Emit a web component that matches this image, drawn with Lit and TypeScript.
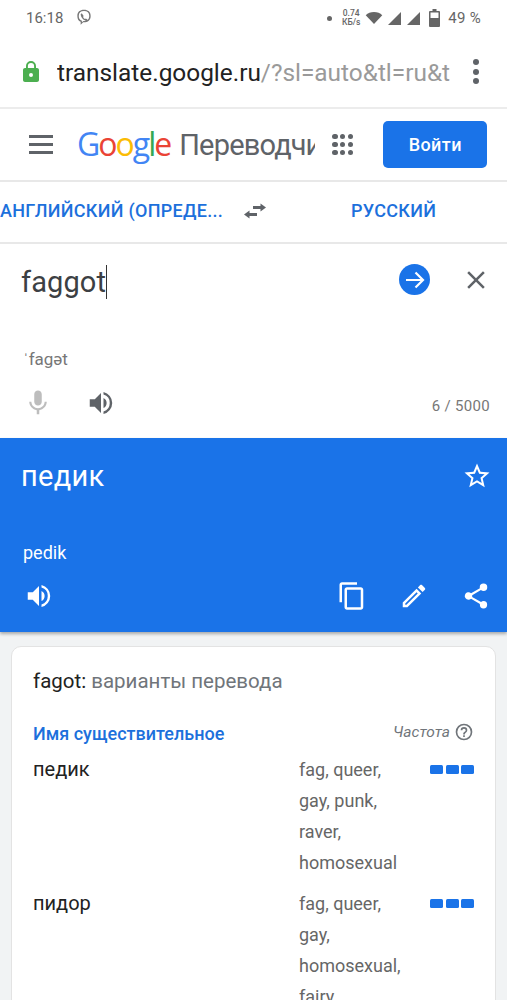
import { LitElement, html, css, svg } from 'lit';
import { customElement } from 'lit/decorators.js';

const icon = (size: number, d: string, cls = '') => html`
  <svg class=${cls} width=${size} height=${size} viewBox="0 0 24 24" fill="currentColor">${svg`<path d=${d}></path>`}</svg>
`;

const SPEAKER = 'M3 9v6h4l5 5V4L7 9H3zm13.5 3A4.5 4.5 0 0 0 14 7.97v8.05A4.48 4.48 0 0 0 16.5 12zM14 3.23v2.06a7 7 0 0 1 0 13.42v2.06a9 9 0 0 0 0-17.54z';
const MIC = 'M12 14c1.66 0 3-1.34 3-3V5c0-1.66-1.34-3-3-3S9 3.34 9 5v6c0 1.66 1.34 3 3 3zm5.3-3c0 3-2.54 5.1-5.3 5.1S6.7 14 6.7 11H5c0 3.41 2.72 6.23 6 6.72V21h2v-3.28c3.28-.48 6-3.3 6-6.72h-1.7z';
const COPY = 'M16 1H4c-1.1 0-2 .9-2 2v14h2V3h12V1zm3 4H8c-1.1 0-2 .9-2 2v14c0 1.1.9 2 2 2h11c1.1 0 2-.9 2-2V7c0-1.1-.9-2-2-2zm0 16H8V7h11v14z';
const PENCIL = 'M14.06 9.02l.92.92L5.92 19H5v-.92l9.06-9.06M17.66 3c-.25 0-.51.1-.7.29l-1.83 1.83 3.75 3.75 1.83-1.83a1 1 0 0 0 0-1.41l-2.34-2.34c-.2-.2-.45-.29-.71-.29zm-3.6 3.19L3 17.25V21h3.75L17.81 9.94l-3.75-3.75z';
const SHARE = 'M18 16.08c-.76 0-1.44.3-1.96.77L8.91 12.7c.05-.23.09-.46.09-.7s-.04-.47-.09-.7l7.05-4.11c.54.5 1.25.81 2.04.81a3 3 0 1 0-3-3c0 .24.04.47.09.7L8.04 9.81A3 3 0 1 0 6 15c.79 0 1.5-.31 2.04-.81l7.12 4.16c-.05.21-.08.43-.08.65a2.92 2.92 0 1 0 2.92-2.92z';
const STAR = 'M22 9.24l-7.19-.62L12 2 9.19 8.63 2 9.24l5.46 4.73L5.82 21 12 17.27 18.18 21l-1.63-7.03L22 9.24zM12 15.4l-3.76 2.27 1-4.28-3.32-2.88 4.38-.38L12 6.1l1.71 4.04 4.38.38-3.32 2.88 1 4.28L12 15.4z';
const HELP = 'M11 18h2v-2h-2v2zm1-16a10 10 0 1 0 0 20 10 10 0 0 0 0-20zm0 18a8 8 0 1 1 0-16 8 8 0 0 1 0 16zm0-14a4 4 0 0 0-4 4h2a2 2 0 1 1 4 0c0 2-3 1.75-3 5h2c0-2.25 3-2.5 3-5a4 4 0 0 0-4-4z';
const LOCK = 'M18 8h-1V6A5 5 0 0 0 7 6v2H6c-1.1 0-2 .9-2 2v10c0 1.1.9 2 2 2h12c1.1 0 2-.9 2-2V10c0-1.1-.9-2-2-2zm-6 9a2 2 0 1 1 0-4 2 2 0 0 1 0 4zm3.1-9H8.900V6a3.100 3.100 0 0 1 6.200 0v2z';
const CLOSE = 'M19 6.41L17.59 5 12 10.59 6.410 5 5 6.410 10.590 12 5 17.590 6.410 19 12 13.410 17.590 19 19 17.590 13.410 12z';

const ROWS = [
  { word: 'педик', syn: ['fag, queer,', 'gay, punk,', 'raver,', 'homosexual'] },
  { word: 'пидор', syn: ['fag, queer,', 'gay,', 'homosexual,', 'fairy'] },
];

@customElement('app-root')
export class AppRoot extends LitElement {
  static styles = css`
    :host {
      display: block;
      width: 507px;
      height: 1000px;
      overflow: hidden;
      background: #f1f3f4;
      font-family: Roboto, 'Liberation Sans', sans-serif;
    }
    svg { display: block; flex: none; }

    .status {
      height: 36px;
      background: #fff;
      display: flex;
      align-items: center;
      padding: 0 26px;
      color: #666;
      font-size: 15px;
    }
    .status .viber { margin-left: 11px; color: #777; }
    .status .right { margin-left: auto; display: flex; align-items: center; }
    .status .dot { width: 5px; height: 5px; border-radius: 50%; background: #666; margin-right: 9px; }
    .speed { font-size: 8.500px; line-height: 9px; text-align: center; width: 20px; margin-right: 4px; font-weight: 500; }
    .pct { margin-left: 8px; letter-spacing: 0.3px; }
    .signal { margin-left: 6px; }
    .signal.first { margin-left: 5px; }
    .battery { margin-left: 9px; }

    .urlbar {
      height: 71px;
      background: #fff;
      border-bottom: 2px solid #ececec;
      display: flex;
      align-items: center;
      padding-left: 19px;
    }
    .lock { color: #4caf50; }
    .url {
      margin: 1px 0 0 14px;
      font-size: 24.400px;
      color: #222;
      white-space: nowrap;
      width: 397px;
      overflow: hidden;
    }
    .url span { color: #9a9a9a; }
    .more { margin-left: 19px; display: flex; flex-direction: column; gap: 3.500px; }
    .more i { width: 6px; height: 6px; border-radius: 50%; background: #5f6368; display: block; }

    .topbar {
      height: 71px;
      background: #fff;
      border-bottom: 2px solid #e8e8e8;
      display: flex;
      align-items: center;
      padding-left: 29px;
    }
    .burger { display: flex; flex-direction: column; gap: 5px; width: 24px; }
    .burger i { height: 3px; background: #5f6368; display: block; }
    .logo {
      margin-left: 24px;
      font-family: 'Open Sans', sans-serif;
      font-size: 32px;
      font-weight: 500;
      letter-spacing: -2px;
      line-height: 40px;
      margin-top: -2px;
    }
    .b { color: #4285f4; } .r { color: #ea4335; } .y { color: #fbbc05; } .g { color: #34a853; }
    .product {
      margin-left: 9px;
      width: 136px;
      overflow: hidden;
      white-space: nowrap;
      font-size: 29px;
      letter-spacing: -0.800px;
      color: #5f6368;
      line-height: 40px;
    }
    .apps { margin-left: 17px; display: grid; grid-template-columns: repeat(3, 5.500px); gap: 2.300px; }
    .apps i { width: 5.500px; height: 5.500px; border-radius: 50%; background: #5f6368; display: block; }
    .signin {
      margin-left: 30px;
      width: 104px;
      height: 47px;
      border-radius: 5px;
      background: #1a73e8;
      color: #fff;
      font-size: 18px;
      font-weight: 500;
      display: flex;
      align-items: center;
      justify-content: center;
      letter-spacing: 0.4px;
    }

    .langs {
      height: 62px;
      box-sizing: border-box;
      padding-bottom: 3px;
      background: #fff;
      border-bottom: 2px solid #e8e8e8;
      display: flex;
      align-items: center;
      color: #1c70dc;
      font-size: 18px;
      font-weight: 500;
      letter-spacing: 0.3px;
    }
    .langs .src { width: 243px; white-space: nowrap; }
    .langs .swap { color: #5f6368; width: 24px; }
    .langs .dst { margin-left: 84px; }

    .input {
      height: 194px;
      background: #fff;
      display: flex;
      flex-direction: column;
      padding: 0 17px 0 21px;
    }
    .entry { display: flex; align-items: center; height: 72px; }
    .entry .text { font-size: 29px; color: #3c4043; letter-spacing: 0.1px; border-right: 1px solid #333; line-height: 34px; margin-top: 4px; }
    .go {
      margin: -1px 0 0 auto;
      width: 31px;
      height: 31px;
      border-radius: 50%;
      background: #1a73e8;
      color: #fff;
      display: flex;
      align-items: center;
      justify-content: center;
    }
    .close { margin: -1px -1px 0 31px; color: #5f6368; }
    .phon { margin: 33px 0 0 2px; font-size: 17px; color: #777; line-height: 20px; }
    .tools { display: flex; align-items: center; margin-top: 19px; }
    .tools .mic { color: #bdbdbd; margin-left: 2px; }
    .tools .spk { color: #5f6368; margin-left: 33px; }
    .tools .count { margin-left: auto; font-size: 15px; color: #777; letter-spacing: 0.3px; margin-top: 5px; }

    .result {
      height: 194px;
      background: #1a73e8;
      color: #fff;
      box-shadow: 0 2px 3px rgba(0, 0, 0, 0.3);
      padding: 0 16px 0 21px;
      display: flex;
      flex-direction: column;
      position: relative;
    }
    .res-top { display: flex; align-items: center; height: 76px; }
    .res-top .word { font-size: 29px; letter-spacing: 0.3px; }
    .res-top svg { margin: 0 -1px 0 auto; }
    .translit { margin: 29px 0 0 2px; font-size: 18px; line-height: 20px; }
    .actions { display: flex; align-items: center; margin-top: 18px; padding-left: 3px; }
    .actions .last { margin-left: auto; display: flex; gap: 32px; }

    .card {
      margin: 14px 11px 0;
      background: #fff;
      border: 1px solid #e3e3e3;
      border-radius: 10px;
      padding: 22px 21px 0;
    }
    .card h2 { margin: 0; font-size: 20.500px; line-height: 24px; font-weight: 400; color: #70757a; }
    .card h2 b { font-weight: 400; color: #222; }
    .pos { display: flex; align-items: center; justify-content: space-between; margin: 28px 0 9px; height: 24px; }
    .pos .name { color: #1c70dc; font-size: 18px; font-weight: 500; }
    .freq { display: flex; align-items: center; gap: 4px; color: #70757a; font-size: 15.500px; font-style: italic; margin-top: -3px; }
    .row { display: grid; grid-template-columns: 266px 131px 44px; margin-bottom: 10px; }
    .row .word { font-size: 20px; color: #222; line-height: 31px; }
    .row .syn { font-size: 18px; color: #666; line-height: 31px; }
    .bars { display: flex; gap: 2.500px; margin-top: 11px; }
    .bars i { display: block; width: 13px; height: 9px; border-radius: 1.500px; background: #1a73e8; }
  `;

  render() {
    return html`
      <div class="status">
        <span>16:18</span>
        ${icon(20, 'M12 2C7 2 4 4.500 4 9.500c0 3.500 1.300 5.800 4 7V20l3-2.800c5.500.3 9-2.500 9-7.700C20 4.500 17 2 12 2zm0 1.700c4 0 6.300 2 6.300 5.800 0 4-2.500 6.200-7 6l-1.800 1.700V15.300C6.900 14.300 5.700 12.500 5.700 9.500 5.700 5.700 8 3.700 12 3.700zM9.300 6.300L8 7.500c0 3.500 3.500 7.500 7 8l1.300-1.500-2-1.500-1 .7c-1-.5-2-1.500-2.500-2.500l.8-1z', 'viber')}
        <div class="right">
          <i class="dot"></i>
          <div class="speed">0.74<br />КБ/s</div>
          ${icon(18, 'M12 4C7.500 4 3.800 5.700 1 8.200L12 20 23 8.200C20.200 5.700 16.500 4 12 4z')}
          <svg class="signal first" width="13" height="13" viewBox="0 0 13 13" fill="currentColor"><path d="M13 0v13H0z"></path></svg>
          <svg class="signal" width="13" height="13" viewBox="0 0 13 13" fill="currentColor"><path d="M13 0v13H0z"></path></svg>
          <svg class="battery" width="11" height="18" viewBox="0 0 11 18" fill="currentColor"><path d="M3.500 0h4v2H10a1 1 0 0 1 1 1v14a1 1 0 0 1-1 1H1a1 1 0 0 1-1-1V3a1 1 0 0 1 1-1h2.500zM1.500 3.500V9h8V3.500z"></path></svg>
          <span class="pct">49 %</span>
        </div>
      </div>

      <div class="urlbar">
        ${icon(24, LOCK, 'lock')}
        <div class="url">translate.google.ru<span>/?sl=auto&amp;tl=ru&amp;t</span></div>
        <div class="more"><i></i><i></i><i></i></div>
      </div>

      <div class="topbar">
        <div class="burger"><i></i><i></i><i></i></div>
        <div class="logo"><span class="b">G</span><span class="r">o</span><span class="y">o</span><span class="b">g</span><span class="g">l</span><span class="r">e</span></div>
        <div class="product">Переводчик</div>
        <div class="apps">${Array.from({ length: 9 }, () => html`<i></i>`)}</div>
        <div class="signin">Войти</div>
      </div>

      <div class="langs">
        <div class="src">АНГЛИЙСКИЙ (ОПРЕДЕ...</div>
        <svg class="swap" width="24" height="24" viewBox="0 0 24 24" fill="currentColor"><path d="M6.500 11.500L1 15.500l5.500 4V17H14v-3H6.500zM23 8.500l-5.500-4V7H10v3h7.500v2.500z"></path></svg>
        <div class="dst">РУССКИЙ</div>
      </div>

      <div class="input">
        <div class="entry">
          <span class="text">faggot</span>
          <div class="go">
            <svg width="24" height="24" viewBox="0 0 24 24" fill="none" stroke="currentColor" stroke-width="2.200"><path d="M3 12h17M12.500 4.500L20 12l-7.500 7.500"></path></svg>
          </div>
          ${icon(30, CLOSE, 'close')}
        </div>
        <div class="phon">ˈfagət</div>
        <div class="tools">
          ${icon(30, MIC, 'mic')}
          ${icon(30, SPEAKER, 'spk')}
          <span class="count">6 / 5000</span>
        </div>
      </div>

      <div class="result">
        <div class="res-top">
          <span class="word">педик</span>
          ${icon(30, STAR)}
        </div>
        <div class="translit">pedik</div>
        <div class="actions">
          ${icon(30, SPEAKER)}
          <div class="last">
            ${icon(30, COPY)}
            ${icon(30, PENCIL)}
            ${icon(30, SHARE)}
          </div>
        </div>
      </div>

      <div class="card">
        <h2><b>fagot:</b> варианты перевода</h2>
        <div class="pos">
          <span class="name">Имя существительное</span>
          <span class="freq">Частота ${icon(20, HELP)}</span>
        </div>
        ${ROWS.map(
          (r) => html`
            <div class="row">
              <div class="word">${r.word}</div>
              <div class="syn">${r.syn.map((s) => html`<div>${s}</div>`)}</div>
              <div class="bars"><i></i><i></i><i></i></div>
            </div>
          `
        )}
      </div>
    `;
  }
}
